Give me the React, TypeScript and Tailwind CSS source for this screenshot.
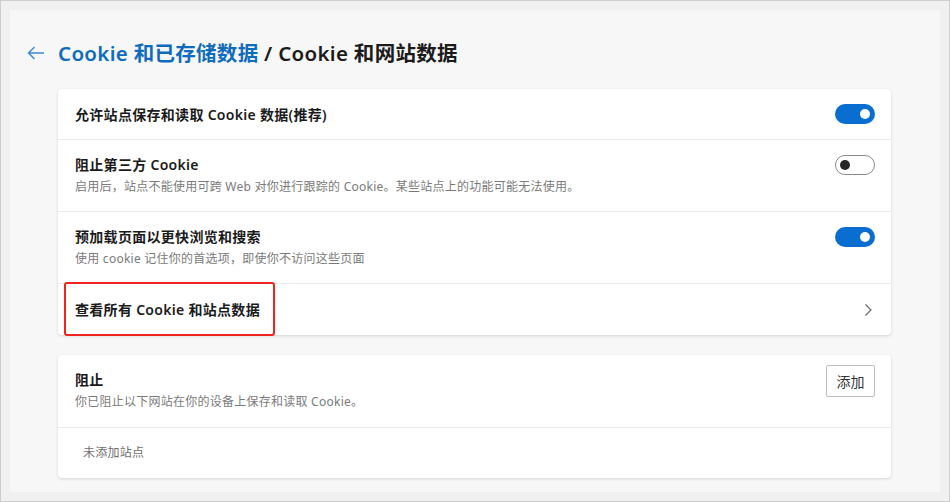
import React from "react";

const font = { fontFamily: '"Noto Sans", "Noto Sans CJK SC", sans-serif' };

function ToggleOn() {
  return (
    <div className="flex h-[20px] w-[40px] items-center justify-end rounded-full bg-[#0a6ed1] pr-[5px]">
      <div className="h-[10px] w-[10px] rounded-full bg-white" />
    </div>
  );
}

function ToggleOff() {
  return (
    <div className="flex h-[20px] w-[40px] items-center justify-start rounded-full border border-[#8a8a8a] bg-white pl-[4px]">
      <div className="h-[10px] w-[10px] rounded-full bg-[#262626]" />
    </div>
  );
}

export default function App() {
  return (
    <div
      className="h-[502px] w-[950px] border border-[#cdcdcd] bg-[#f0f0f0] p-[9px]"
      style={font}
    >
      <div className="h-full w-full bg-[#f7f7f7] pl-[48px] pr-[49px] pt-[27px]">
        <div className="relative flex h-[32px] items-center">
          <svg
            className="absolute left-[-31px] top-[9px]"
            width="18"
            height="14"
            viewBox="0 0 18 14"
            fill="none"
            stroke="#3a8ad6"
            strokeWidth="1.4"
          >
            <path d="M17 7H1.5M7.5 1L1.5 7l6 6" />
          </svg>
          <span className="text-[20.5px] font-semibold leading-none tracking-[0.3px] text-[#0f6cbd]">
            Cookie 和已存储数据
          </span>
          <span className="whitespace-pre text-[20.5px] font-semibold leading-none tracking-[0.3px] text-[#1b1b1b]">
            {" / Cookie 和网站数据"}
          </span>
        </div>

        <div className="mt-[20px] rounded-[4px] bg-white shadow-[0_1px_3px_rgba(0,0,0,0.14)]">
          <div className="flex h-[51px] items-center justify-between border-b border-[#ebebeb] pl-[17px] pr-[16px]">
            <span className="text-[14px] font-semibold tracking-[0.3px] text-[#1b1b1b]">
              允许站点保存和读取 Cookie 数据(推荐)
            </span>
            <ToggleOn />
          </div>
          <div className="flex h-[72px] items-start justify-between border-b border-[#ebebeb] pl-[17px] pr-[16px] pt-[15px]">
            <div className="flex flex-col">
              <span className="text-[14px] font-semibold leading-[20px] tracking-[0.3px] text-[#1b1b1b]">
                阻止第三方 Cookie
              </span>
              <span className="mt-[3px] text-[12px] leading-[18px] tracking-[0.25px] text-[#7a7a7a]">
                启用后，站点不能使用可跨 Web 对你进行跟踪的 Cookie。某些站点上的功能可能无法使用。
              </span>
            </div>
            <ToggleOff />
          </div>
          <div className="flex h-[72px] items-start justify-between border-b border-[#ebebeb] pl-[17px] pr-[16px] pt-[15px]">
            <div className="flex flex-col">
              <span className="text-[14px] font-semibold leading-[20px] tracking-[0.3px] text-[#1b1b1b]">
                预加载页面以更快浏览和搜索
              </span>
              <span className="mt-[3px] text-[12px] leading-[18px] tracking-[0.25px] text-[#7a7a7a]">
                使用 cookie 记住你的首选项，即使你不访问这些页面
              </span>
            </div>
            <ToggleOn />
          </div>
          <div className="relative flex h-[51px] items-center justify-between pl-[17px] pr-[18px]">
            <div className="absolute left-[6px] top-[-2px] h-[54px] w-[211px] rounded-[3px] border-2 border-[#f0231e]" />
            <span className="text-[14px] font-semibold tracking-[0.3px] text-[#1b1b1b]">
              查看所有 Cookie 和站点数据
            </span>
            <svg width="10" height="14" viewBox="0 0 10 14" fill="none" stroke="#6a6a6a" strokeWidth="1.2">
              <path d="M2.5 1.5L8 7l-5.5 5.5" />
            </svg>
          </div>
        </div>

        <div className="mt-[20px] rounded-[4px] bg-white shadow-[0_1px_3px_rgba(0,0,0,0.14)]">
          <div className="flex h-[73px] items-start justify-between border-b border-[#ebebeb] pl-[17px] pr-[16px] pt-[15px]">
            <div className="flex flex-col">
              <span className="text-[14px] font-semibold leading-[20px] tracking-[0.3px] text-[#1b1b1b]">
                阻止
              </span>
              <span className="mt-[3px] text-[12px] leading-[18px] tracking-[0.25px] text-[#7a7a7a]">
                你已阻止以下网站在你的设备上保存和读取 Cookie。
              </span>
            </div>
            <button className="mt-[-5px] flex h-[32px] w-[49px] items-center justify-center rounded-[2px] border border-[#bdbdbd] bg-white text-[14px] text-[#333]">
              添加
            </button>
          </div>
          <div className="flex h-[50px] items-center pl-[25px]">
            <span className="text-[12px] tracking-[0.25px] text-[#6e6e6e]">未添加站点</span>
          </div>
        </div>
      </div>
    </div>
  );
}
